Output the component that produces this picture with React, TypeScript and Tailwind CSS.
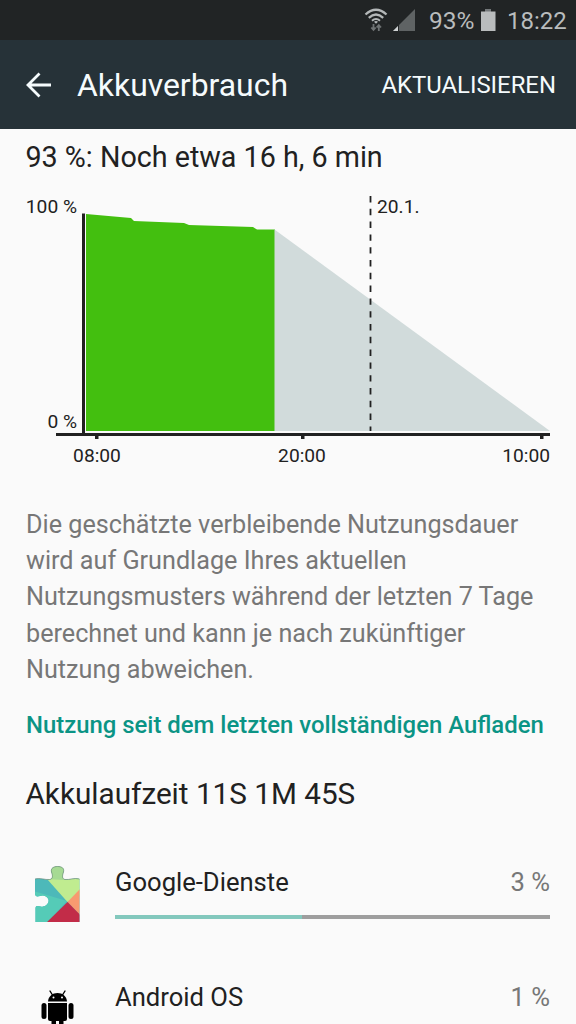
import type { ReactNode } from "react"

type AppUsage = {
  name: string
  percent: string
  bar: number
  icon: ReactNode
}

const usage: AppUsage[] = [
  { name: "Google-Dienste", percent: "3 %", bar: 43, icon: <PlayServicesIcon /> },
  { name: "Android OS", percent: "1 %", bar: 14, icon: <AndroidIcon /> },
]

const hint = [
  "Die geschätzte verbleibende Nutzungsdauer",
  "wird auf Grundlage Ihres aktuellen",
  "Nutzungsmusters während der letzten 7 Tage",
  "berechnet und kann je nach zukünftiger",
  "Nutzung abweichen.",
]

function PlayServicesIcon() {
  return (
    <svg className="mt-px" width="64" height="64" viewBox="0 0 64 64">
      <defs>
        <clipPath id="puzzle">
          <path d="M10 18 C15 16.500 20 19 24.500 18.500 C28.500 18 27.500 14 26.500 11 C25.500 7 29 5.500 32.500 5.500 C36.500 5.500 39.500 7 38.500 11 C37.500 14 36.500 18 40 18.500 C45 19 49 16.500 54.500 18 V61 H10.500 V47 C11 43 15 46.500 18 45.500 C25.500 44 25.500 35.500 18 34.500 C14.500 34.500 11 37.500 10 33 Z" />
        </clipPath>
      </defs>
      <g clipPath="url(#puzzle)">
        <rect width="64" height="64" fill="#4db9b9" />
        <path d="M8 30 L42 40 L22 62 H8 Z" fill="#55cbb7" />
        <path d="M22 18 L24 0 H64 V31 L42.500 41 Z" fill="#c0ec90" />
        <path d="M22 18 L26 3 H39 L38 19 Z" fill="#a6da94" />
        <path d="M42.500 41 L56 27 V55 Z" fill="#f89a70" />
        <path d="M42.500 41 L20 63 H64 Z" fill="#c22c48" />
      </g>
      <path d="M10 18 C15 16.500 20 19 24.500 18.500 C28.500 18 27.500 14 26.500 11 C25.500 7 29 5.500 32.500 5.500 C36.500 5.500 39.500 7 38.500 11 C37.500 14 36.500 18 40 18.500 C45 19 49 16.500 54.500 18" fill="none" stroke="#6d8a7c" strokeOpacity=".7" strokeWidth="1" />
    </svg>
  )
}

function AndroidIcon() {
  return (
    <svg className="mt-px" width="64" height="64" viewBox="0 0 64 64" fill="#000">
      <path d="M25 15 L27.500 19 M40 15 L37.500 19" stroke="#000" strokeWidth="1.400" strokeLinecap="round" />
      <path d="M23 25.500 C23.500 20 27.500 17 32.500 17 C37.500 17 41.500 20 42 25.500 Z" />
      <circle cx="28.500" cy="21.500" r="1" fill="#fafafa" />
      <circle cx="37" cy="21.500" r="1" fill="#fafafa" />
      <path d="M23 27 H42 V43 Q42 45 40 45 H25 Q23 45 23 43 Z" />
      <rect x="16.500" y="27" width="5" height="16" rx="2.500" />
      <rect x="43.500" y="27" width="5" height="16" rx="2.500" />
      <rect x="26.500" y="43" width="4.500" height="9" rx="2" />
      <rect x="34" y="43" width="4.500" height="9" rx="2" />
    </svg>
  )
}

function StatusBar() {
  return (
    <header className="flex h-10 items-center bg-[#212425] pl-[364px] text-[#b9bcbd]">
      <svg width="24" height="26" viewBox="0 0 24 26" fill="none" stroke="#b4b8b9">
        <path d="M1.500 7.500 Q12 -2 22.500 7.500" strokeWidth="2.300" />
        <path d="M4.800 10.800 Q12 4.300 19.200 10.800" strokeWidth="2.300" />
        <path d="M8 13.800 Q12 10.300 16 13.800" strokeWidth="2" />
        <path d="M10 14.800 Q12 13.200 14 14.800 L12 16.800 Z" fill="#b4b8b9" stroke="none" />
        <path d="M9.500 17 V23 M7.300 20.500 L9.500 23 L11.700 20.500 M14.800 24 V18 M12.600 20.500 L14.800 18 L17 20.500" stroke="#6f7374" strokeWidth="1.800" />
      </svg>
      <svg className="ml-[5px]" width="22" height="26" viewBox="0 0 22 26">
        <path d="M0 24 L22 2 V24 Z" fill="#5f6364" />
        <path d="M0 24 L5 19 V24 Z" fill="#d0d3d4" />
        <path d="M5.500 17 V24" stroke="#212425" strokeWidth="1" />
      </svg>
      <span className="ml-3.5 w-[46px] pt-0.5 text-[24.500px] whitespace-nowrap">93%</span>
      <svg className="ml-[5px]" width="16" height="24" viewBox="0 0 16 24" fill="#b9bcbd">
        <rect x="5" y="1" width="6" height="3" fill="#74787a" />
        <rect x="1" y="3.500" width="14.500" height="19.500" />
      </svg>
      <span className="ml-[11px] pt-0.5 text-[24px] whitespace-nowrap">18:22</span>
    </header>
  )
}

function BatteryChart() {
  return (
    <svg className="block" width="576" height="290" viewBox="0 180 576 290" fontSize="19.200" fill="#212121">
      <path d="M86 214 L131 218 L134 221 L184 223 L189 225 L253 227 L257 229.500 H275 V431 H86 Z" fill="#43bf0f" />
      <path d="M274.500 229.500 L550 431 H274.500 Z" fill="#d1dbdb" />
      <path d="M370.500 196 V431" stroke="#212121" strokeWidth="1.800" strokeDasharray="6.400 6.400" />
      <rect x="82" y="213.500" width="3" height="220" />
      <rect x="56" y="433" width="494" height="3" />
      <rect x="95" y="435" width="3.500" height="4" />
      <rect x="301" y="435" width="3.500" height="4" />
      <rect x="540" y="435" width="3.500" height="4" />
      <text x="77" y="213" textAnchor="end">100 %</text>
      <text x="77" y="428" textAnchor="end">0 %</text>
      <text x="377" y="213">20.1.</text>
      <text x="97" y="462" textAnchor="middle">08:00</text>
      <text x="302" y="462" textAnchor="middle">20:00</text>
      <text x="550" y="462" textAnchor="end">10:00</text>
    </svg>
  )
}

export default function App() {
  return (
    <div className="h-[1024px] w-[576px] overflow-hidden bg-[#fafafa] font-['Roboto',sans-serif] text-[#212121]">
      <StatusBar />

      <div className="flex h-[89px] items-center bg-[#263238] pr-5 pl-[26px] text-[#f5fbfd]">
        <svg width="26" height="26" viewBox="0 0 26 26" fill="none" stroke="currentColor" strokeWidth="2.800">
          <path d="M25 13 H2 M13.500 1.500 L2 13 L13.500 24.500" />
        </svg>
        <h1 className="ml-[25px] pt-0.5 text-[31.900px] whitespace-nowrap">Akkuverbrauch</h1>
        <button type="button" className="ml-auto pt-[3px] text-[23.900px] whitespace-nowrap">AKTUALISIEREN</button>
      </div>

      <h2 className="flex h-[51px] items-center px-[25.500px] pt-1.5 text-[28.700px] whitespace-nowrap">
        93 %: Noch etwa 16 h, 6 min
      </h2>

      <BatteryChart />

      <p className="mt-[36.500px] px-[26px] text-[25.200px] leading-[36.400px] whitespace-nowrap text-[#777777]">
        {hint.map((line) => (
          <span key={line} className="block">{line}</span>
        ))}
      </p>

      <h3 className="mt-[18.500px] px-[26px] text-[23.900px] leading-9 font-medium whitespace-nowrap text-[#0b9485]">
        Nutzung seit dem letzten vollständigen Aufladen
      </h3>

      <h2 className="mt-[31px] px-[25.500px] text-[29.700px] leading-10 whitespace-nowrap">Akkulaufzeit 11S 1M 45S</h2>

      <ul className="mt-[46px]">
        {usage.map((app) => (
          <li key={app.name} className="flex h-[115px] pr-[26px] pl-[25px]">
            {app.icon}
            <div className="ml-[26px] flex-1">
              <div className="flex h-11 items-center justify-between text-[25.600px]">
                <span>{app.name}</span>
                <span className="text-[#777777]">{app.percent}</span>
              </div>
              <div className="mt-[10.500px] h-[4.500px] bg-[#9e9e9e]">
                <div className="h-full bg-[#83c8bd]" style={{ width: `${app.bar}%` }} />
              </div>
            </div>
          </li>
        ))}
      </ul>
    </div>
  )
}
